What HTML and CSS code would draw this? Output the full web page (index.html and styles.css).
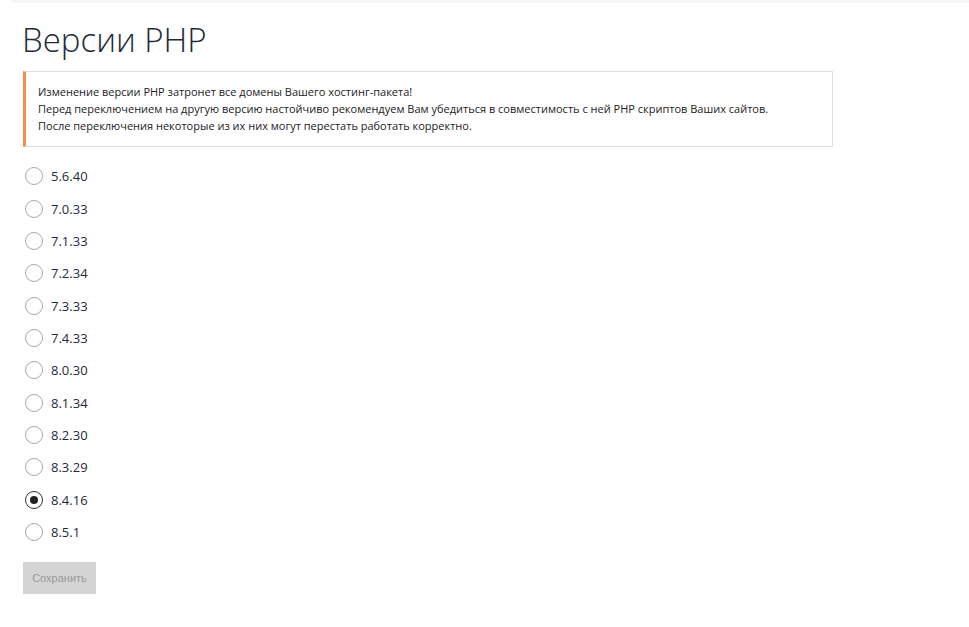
FILE: index.html
```html
<!DOCTYPE html>
<html lang="ru">
<head>
<meta charset="utf-8">
<title>Версии PHP</title>
<link rel="stylesheet" href="styles.css">
</head>
<body>
<div class="topbar"></div>
<main class="page">
  <h1 class="title">Версии PHP</h1>
  <div class="alert">
    <p>Изменение версии PHP затронет все домены Вашего хостинг-пакета!</p>
    <p>Перед переключением на другую версию настойчиво рекомендуем Вам убедиться в совместимость с ней PHP скриптов Ваших сайтов.</p>
    <p>После переключения некоторые из их них могут перестать работать корректно.</p>
  </div>
  <form class="versions">
    <label class="option"><input type="radio" name="php" class="radio"><span>5.6.40</span></label>
    <label class="option"><input type="radio" name="php" class="radio"><span>7.0.33</span></label>
    <label class="option"><input type="radio" name="php" class="radio"><span>7.1.33</span></label>
    <label class="option"><input type="radio" name="php" class="radio"><span>7.2.34</span></label>
    <label class="option"><input type="radio" name="php" class="radio"><span>7.3.33</span></label>
    <label class="option"><input type="radio" name="php" class="radio"><span>7.4.33</span></label>
    <label class="option"><input type="radio" name="php" class="radio"><span>8.0.30</span></label>
    <label class="option"><input type="radio" name="php" class="radio"><span>8.1.34</span></label>
    <label class="option"><input type="radio" name="php" class="radio"><span>8.2.30</span></label>
    <label class="option"><input type="radio" name="php" class="radio"><span>8.3.29</span></label>
    <label class="option"><input type="radio" name="php" class="radio" checked><span>8.4.16</span></label>
    <label class="option"><input type="radio" name="php" class="radio"><span>8.5.1</span></label>
    <button type="button" class="save" disabled>Сохранить</button>
  </form>
</main>
</body>
</html>
```

FILE: styles.css
```css
html, body {
  margin: 0;
  padding: 0;
  background: #fff;
}

body {
  font-family: "Open Sans", "Noto Sans", sans-serif;
  color: #222;
}

.topbar {
  height: 3px;
  margin-left: 12px;
  background: #f6f6f6;
}

.page {
  padding: 0 0 0 23px;
}

.title {
  margin: 17px 0 11px -1px;
  font-size: 33px;
  line-height: 40px;
  font-weight: 300;
  color: #1f2a38;
}

.alert {
  width: 810px;
  box-sizing: border-box;
  border: 1px solid #e0e0e0;
  border-left: 3px solid #f7914a;
  padding: 11px 12px 12px 12px;
  font-size: 11px;
  line-height: 17px;
  color: #222;
}

.alert p {
  margin: 0;
}

.versions {
  margin-top: 13px;
  display: flex;
  flex-direction: column;
  align-items: flex-start;
}

.option {
  display: flex;
  align-items: center;
  gap: 8px;
  height: 32.35px;
  font-size: 13px;
  color: #1f2a38;
  cursor: pointer;
}

.radio {
  appearance: none;
  -webkit-appearance: none;
  margin: 0 0 0 2px;
  width: 18px;
  height: 18px;
  border: 1px solid #a8a8a8;
  border-radius: 50%;
  background: #fff;
  display: grid;
  place-items: center;
  box-sizing: border-box;
}

.radio:checked {
  border: 1.5px solid #333;
}

.radio:checked::after {
  content: "";
  width: 8px;
  height: 8px;
  border-radius: 50%;
  background: #222;
}

.save {
  margin-top: 14px;
  width: 73px;
  height: 32px;
  border: none;
  background: #d4d4d4;
  color: #9a9a9a;
  font-family: "Liberation Sans", Arial, sans-serif;
  font-size: 11px;
  padding: 0;
}
```
